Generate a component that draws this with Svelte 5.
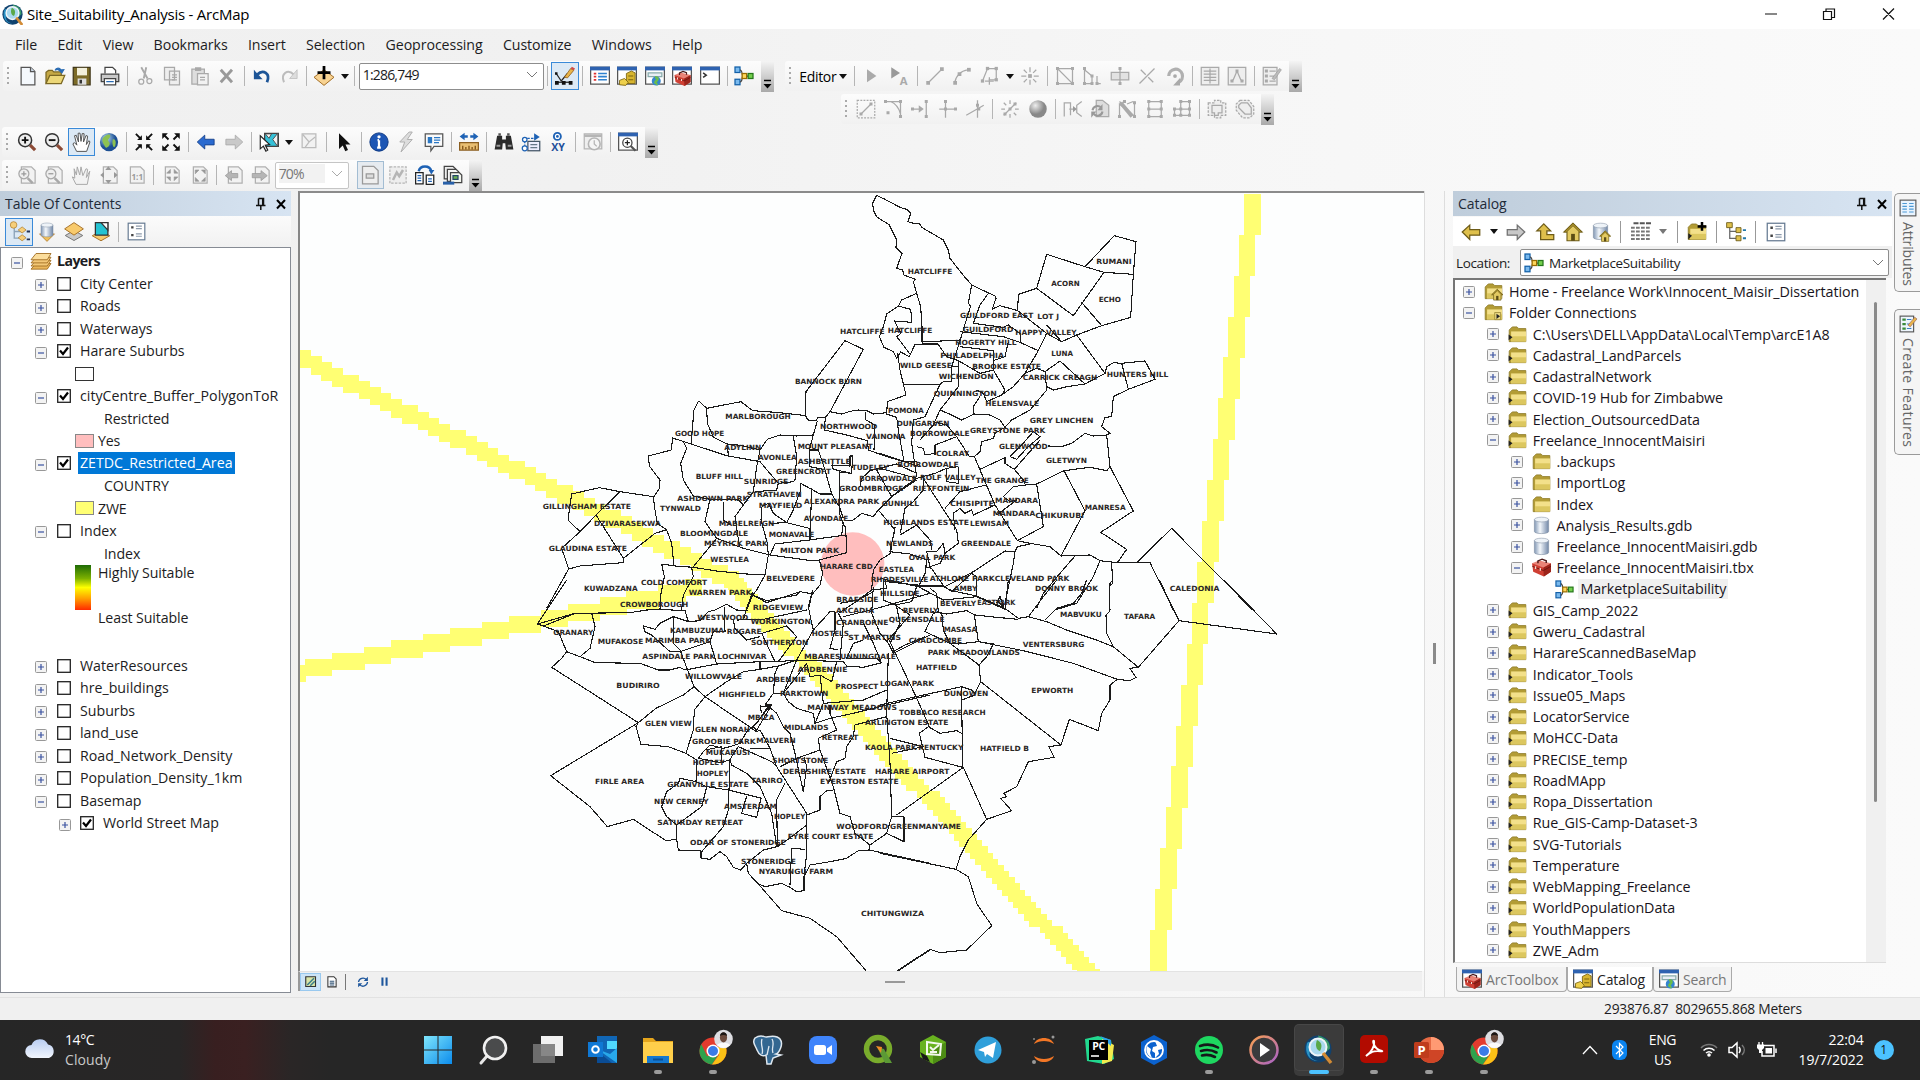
<script>
  // ---------- 16x16 glyphs for toolbars and trees ----------
  const win = '<rect x=".5" y="1" width="15" height="13.5" fill="#fff" stroke="#555"/><rect x="0" y=".5" width="16" height="3" fill="#2e62b0"/>';
  const mag = '<circle cx="6.5" cy="6.5" r="5.2" fill="#eee" stroke="#333" stroke-width="1.2"/><path d="M10.5 10.5l4 4" stroke="#8c4a35" stroke-width="2.6"/>';
  const gpage = '<path d="M3.5 1.5h8l3 3v10h-11z" fill="#f2f2f2" stroke="#b0b0b0"/>';
  const gmag = gpage + '<circle cx="5.5" cy="7" r="4" fill="#eee" stroke="#a8a8a8"/><path d="M8.5 10.5l4 4" stroke="#a8a8a8" stroke-width="2"/>';
  const folder = '<path d="M1 4.2L3.6 1.6h4L9 3h6v11H1z" fill="#b39c35" stroke="#8f7d2c" stroke-width=".7"/><path d="M2.6 5.4h12.6v8.4H2.6z" fill="#f3e08a"/><path d="M2.6 9.5h12.6v4.3H2.6z" fill="#dcc75f"/>';
  const house = '<path d="M8 1L.8 8h2.4v7h9.6V8h2.4z" fill="#e3ca62" stroke="#6e5c17" stroke-width=".9"/><path d="M8 1L.8 8h2L8 3l5.200 5h2z" fill="#a88f2c" stroke="#6e5c17" stroke-width=".6"/><path d="M6.5 9.5h3V15h-3z" fill="#5c4d14"/>';
  const cyl = '<path d="M2 3v10c0 2.4 12 2.4 12 0V3z" fill="url(#cyl)" stroke="#7d8ca0" stroke-width=".5"/><ellipse cx="8" cy="3" rx="6" ry="2" fill="#eef3f8" stroke="#8a98aa" stroke-width=".5"/>';
  const box = '<path d="M0 4.500l1 7L10 15.500l6-4V4.500z" fill="#cf3f33"/><path d="M9.500 8l.5 7.500 6-4V4.500z" fill="#9c241b"/><path d="M0 4.500L6 2l10 2.500L9.500 8z" fill="#e98377"/><path d="M.3 7L9.600 10.500 16 7" stroke="#6d1510" stroke-width=".8" fill="none"/><path d="M5 4.500V2.500L8.500 1l3.500 1.300v2" fill="none" stroke="#4c1a1a" stroke-width="1.200"/><path d="M3 7v2.200M7 8.500v2.200" stroke="#f7d9d0" stroke-width="1.100"/>';
  const model = '<g stroke-width="1"><rect x=".8" y=".8" width="4" height="4.4" fill="#79b9ee" stroke="#1360a8"/><rect x=".8" y="10.6" width="4" height="4.4" fill="#79b9ee" stroke="#1360a8"/><path d="M5 3c2.500 2 1 4 2 4.500M5 13c2.500-2 1-4 2-4.500M10 8h1.500" stroke="#444" fill="none"/><rect x="6.500" y="6" width="3.600" height="4" fill="#ffd65a" stroke="#9a6c00"/><rect x="11.300" y="6" width="3.900" height="4" fill="#73cf4c" stroke="#25761b"/></g>';
  const list = '<rect x="1" y="1" width="14" height="14" fill="#fff" stroke="#667a92"/><path d="M3.500 4.500h2M3.500 11h2" stroke="#444" stroke-width="2"/><path d="M7.500 3.500h5M7.500 5.500h5M7.500 10h5M7.500 12h5" stroke="#8d9aab"/>';
  const diamond = (y, f, s) => `<path d="M8 ${y}l7 4-7 4-7-4z" fill="${f}" stroke="${s}" stroke-width=".8"/>`;
  const G = '#a9a9a9';
  const dots = (pts, s = 1.2) => pts.map(([x, y]) => `<rect x="${x - s}" y="${y - s}" width="${s * 2}" height="${s * 2}" fill="${G}"/>`).join('');
  const gl = (d) => `<path d="${d}" fill="none" stroke="${G}" stroke-width="1"/>`;

  const icons = {
    new: '<path d="M2.500 1h7.500l3.500 3.500v10.500h-11z" fill="#f4f8fc" stroke="#555"/><path d="M10 1v3.500h3.500" fill="#cfdbe8" stroke="#555"/>',
    open: '<path d="M.8 14V5l2-1.500h3l1.200 1.200h6V8" fill="#c5a845" stroke="#7b6824"/><path d="M.8 14l3-6.500h12L13 14z" fill="#ecd778" stroke="#7b6824"/><path d="M8 3.500c1-2.500 4-2 4.500-.5M11 3.200l4-.2-1.500 2.500z" stroke="#2b6cb3" fill="#2b6cb3"/>',
    save: '<path d="M1 1h13.500v14H1z" fill="#7c6b28" stroke="#40371a"/><path d="M4 1.500h8v6H4z" fill="#f3f0dc"/><path d="M4.500 10h7v5h-7z" fill="#ddd"/><path d="M6 11h2v3H6z" fill="#333"/>',
    print: '<path d="M4 6V1h6l2.500 2.500V6" fill="#fff" stroke="#444"/><path d="M1 6.500h14v6H1z" fill="#c9c9c9" stroke="#444"/><path d="M3.500 10h9v5h-9z" fill="#fff" stroke="#444"/><path d="M5 12.500h6" stroke="#2b6cb3"/>',
    cut: `<path d="M5 1l5 9M9 1L7 10" stroke="${G}" stroke-width="1.500"/><circle cx="5" cy="12.500" r="2" fill="none" stroke="${G}"/><circle cx="11.500" cy="12" r="2" fill="none" stroke="${G}"/>`,
    copy: `<path d="M2 1h8v10H2zM6 4h8v11H6z" fill="#eee" stroke="${G}"/><path d="M8 7h4M8 9h4M8 11h4" stroke="${G}"/>`,
    paste: `<path d="M1.500 2.500h10v12h-10z" fill="#ddd" stroke="${G}"/><path d="M4 1h5v3H4z" fill="${G}"/><path d="M6 6h8.500v9H6z" fill="#f2f2f2" stroke="${G}"/><path d="M8 9h4M8 11h4" stroke="${G}"/>`,
    del: '<path d="M3 3l9 10M12 3L3 13" stroke="#999" stroke-width="2.300"/>',
    undo: '<path d="M4 7c5-5 11-1 8 6" fill="none" stroke="#1d5597" stroke-width="2.200"/><path d="M1.500 3v7.500h7z" fill="#1d5597"/>',
    redo: '<path d="M12 7C7 2 1 6 4 13" fill="none" stroke="#bcbcbc" stroke-width="1.600"/><path d="M14.500 3v7h-6z" fill="#ddd" stroke="#bbb" stroke-width=".6"/>',
    add: '<path d="M8 3l8 6-8 6.500L0 9z" fill="#f8d392" stroke="#a5712a" stroke-width=".8"/><path d="M8 0v10.500M2.800 5.300h10.400" stroke="#000" stroke-width="2.200"/>',
    edit: '<path d="M1 6l4 6 5-6" fill="none" stroke="#222"/><path d="M1.500 13h11" stroke="#222"/><g fill="#111"><rect x="0" y="12" width="3" height="3"/><rect x="5.500" y="12" width="3" height="3"/><rect x="11" y="12" width="3" height="3"/><rect x="0" y="5" width="2" height="2"/></g><path d="M7.500 9l5-7 2.500 1.500-5 6z" fill="#e9b54a" stroke="#8a5a1a" stroke-width=".6"/><path d="M12.500 2l1-1.500 2.500 1.500-1 1.500z" fill="#d14c45"/>',
    wtoc: win + '<path d="M3 6h2M3 8.500h2M3 11h2" stroke="#d33" stroke-width="1.400"/><path d="M6.500 6h7M6.500 8.500h7M6.500 11h7" stroke="#2e82d0" stroke-width="1.300"/>',
    wcat: win + '<path d="M7.500 6l4-2 3 1.500V14h-7z" fill="#d8b52f" stroke="#7b6510" stroke-width=".7"/><path d="M9 8h4M9 11h4" stroke="#7b6510" stroke-width=".8"/><path d="M2 11.500l4-1.500 3 3-2 2.500-5-.5z" fill="#eed04c" stroke="#7b6510" stroke-width=".7"/>',
    wsearch: win + '<rect x="2.500" y="5.500" width="11" height="3" fill="#e8eef5" stroke="#8aa"/><circle cx="9" cy="12" r="3.600" fill="#3585cf"/><path d="M8 9c2 0 3 1 1 3s1 2 0 3" stroke="#6bbd4a" stroke-width="2" fill="none"/>',
    wbox: win + '<g transform="translate(2 3.500) scale(.8)">' + box + '</g>',
    wpy: win + '<path d="M2.500 5.500l2.500 1.800-2.500 1.800" stroke="#333" fill="none" stroke-width="1.200"/>',
    model, list,
    zin: mag + '<path d="M3.800 6.500h5.400M6.500 3.800v5.400" stroke="#111" stroke-width="1.500"/>',
    zout: mag + '<path d="M3.800 6.500h5.400" stroke="#111" stroke-width="1.500"/>',
    hand: '<path d="M4.500 15.500L1.500 9.500l1.200-1 2 2L2.800 3l1.400-.4L6 8l-.3-7 1.500-.1L8 7.500 9 1.200l1.500.2L10 8l2-5.200 1.300.5-1 6.700 1.900-3 1 .8-2.700 7.700z" fill="#fff" stroke="#555" stroke-width=".8"/>',
    globe: '<circle cx="8" cy="8" r="7.300" fill="url(#globe)"/><path d="M3 5c2-3 6-4 6-2s-3 3-1 5-2 6-3 4-3-4-2-7M11 6c2-1 3 2 2 5s-3-1-2-5" fill="#8cc152"/>',
    fin: '<path d="M1.500 1.500l4 4M14.500 1.500l-4 4M1.500 14.500l4-4M14.500 14.500l-4-4" stroke="#111" stroke-width="1.500"/><path d="M2.500 6.300h3.800V2.500zM9.700 2.500v3.800h3.800zM2.500 9.700h3.800v3.800zM9.700 9.700h3.800L9.700 13.500z" fill="#111"/>',
    fout: '<path d="M2 2l4 4M14 2l-4 4M2 14l4-4M14 14l-4-4" stroke="#111" stroke-width="1.500"/><path d="M1 1h4.500L1 5.500zM15 1v4.500L10.500 1zM1 15v-4.500L5.500 15zM15 15h-4.500l4.500-4.500z" fill="#111"/>',
    prev: '<path d="M1 8l6-5.500v3.300h7.500v4.500H7v3.300z" fill="#2a6ad0" stroke="#153f88" stroke-width=".7"/>',
    next: '<path d="M15 8L9 2.500v3.300H1.500v4.500H9v3.300z" fill="#c9c9c9" stroke="#aaa" stroke-width=".7"/>',
    selfeat: '<path d="M4.500 1h11v10.500h-11z" fill="#35c1d8" stroke="#444"/><path d="M11 6l4-5v10.500zM5 1.500h5L8 5z" fill="#f2f2f2" stroke="#444" stroke-width=".7"/><path d="M1 3l7.500 7-3.500.5 2 4-1.500.8-2-4L1 13.500z" fill="#fff" stroke="#222" stroke-width=".9"/>',
    clear: `<path d="M2.500 1.500h11v11h-11z" fill="#f2f2f2" stroke="#bbb"/><path d="M3 2l5 6 5-4M8 8l-3 4" stroke="#bbb" fill="none"/>`,
    arrow: '<path d="M4 1v12.500l3-2.700 2 4.500 2.200-1-2-4.300h4z" fill="#111"/>',
    info: '<circle cx="8" cy="8" r="7.300" fill="#1d56b4" stroke="#0f3a85" stroke-width=".8"/><path d="M8 6.500v6M6.500 12.500h3M6.800 6.500H8" stroke="#fff" stroke-width="1.800"/><circle cx="8" cy="3.800" r="1.300" fill="#fff"/>',
    bolt: '<path d="M10.500 0L3 8h4l-3 8 9-10H9l4-6z" fill="#ddd" stroke="#b0b0b0" stroke-width=".8"/>',
    popup: '<path d="M1 1.500h14v10H8l-2.500 3.500v-3.500H1z" fill="#fafafa" stroke="#555"/><rect x="3" y="4" width="3.500" height="5" fill="#2b78c5"/><path d="M8 4.500h5M8 6.500h5M8 8.500h4" stroke="#2b78c5"/>',
    measure: '<path d="M.5 3.500l4-3v2H7v2H4.500v2zM15.500 3.500l-4-3v2H9v2h2.500v2z" fill="#1e62b5"/><path d="M.5 8.500h15v6H.5z" fill="#e9bf72" stroke="#8b5e20"/><path d="M3 14v-3M5.500 14v-2M8 14v-3M10.500 14v-2M13 14v-3" stroke="#7b4d12"/>',
    find: '<path d="M2.500 3h4v3h3V3h4l2 11H9.500l-.5-5H7l-.5 5H.5z" fill="#2b2b2b"/><path d="M3.500 1h2v2h-2zM10.500 1h2v2h-2z" fill="#555"/><path d="M2 11h3M11 11h3" stroke="#999" stroke-width="1.500"/>',
    route: '<path d="M3 12V5h9" stroke="#1e62b5" fill="none" stroke-dasharray="2 1"/><path d="M10.500 1v6l4.500-3z" fill="#1e62b5"/><rect x="5.500" y="7.500" width="9.500" height="7.500" fill="#eef" stroke="#456"/><path d="M7.500 10h5.500M7.500 12.500h5.500" stroke="#678"/><circle cx="3" cy="13" r="2" fill="#fff" stroke="#1e62b5"/><circle cx="3" cy="6" r="1.800" fill="#fff" stroke="#1e62b5"/>',
    xy: '<circle cx="7.500" cy="3.500" r="2.800" fill="#fff" stroke="#1e62b5" stroke-width="1.500"/><circle cx="7.500" cy="3.500" r="1.100" fill="#1e62b5"/><text x="8" y="15" font-size="8.500" font-weight="700" text-anchor="middle" fill="#1e4f9b" font-family="Open Sans">XY</text>',
    time: '<path d="M1 1.500h14v12H1z" fill="#eee" stroke="#b5b5b5"/><path d="M1 3h14" stroke="#b5b5b5" stroke-width="2"/><circle cx="9" cy="9.500" r="4.700" fill="#f5f5f5" stroke="#b5b5b5" stroke-width="1.300"/><path d="M9 6.500v3l2 2" stroke="#b5b5b5" fill="none"/>',
    viewer: win + '<circle cx="7.500" cy="8.500" r="3.700" fill="#fff" stroke="#444"/><path d="M10 11l4 4" stroke="#555" stroke-width="1.800"/><path d="M5.500 8.500h4M7.500 6.500v4" stroke="#222"/>',
    pzin: gmag + '<path d="M3.500 7h4M5.500 5v4" stroke="#999"/>',
    pzout: gmag + '<path d="M3.500 7h4" stroke="#999"/>',
    phand: `<path d="M4 15.500L1 9.500l2 1L2.500 3l1.800 5L5 1.500 7 8l1-6.500 1.500 7L12 3l1.300.5-1 6.500 2.700-5-2 10.500z" fill="#f2f2f2" stroke="${G}" stroke-width=".8"/>`,
    pfull: gpage + '<path d="M7.500 1L10 4H5zM7.500 15L10 12H5zM1 8l3-2.500v5zM15 8l-3-2.500v5z" fill="#999"/>',
    p11: gpage + '<text x="9" y="12" font-size="6.500" font-weight="700" text-anchor="middle" fill="#999" font-family="Open Sans">1:1</text>',
    pfin: gpage + '<path d="M4.500 6.500h3v-3zM13.500 6.500h-3v-3zM4.500 9.500h3v3zM13.500 9.500h-3v3z" fill="#999" stroke="#999" stroke-width=".5"/>',
    pfout: gpage + '<path d="M5 4h3L5 7zM13 4v3l-3-3zM5 13v-3l3 3zM13 13h-3l3-3z" fill="#999" stroke="#999" stroke-width=".5"/>',
    pprev: gpage + '<path d="M1 8.500l5-4v2.300h5v3.400H6v2.300z" fill="#b5b5b5" stroke="#999" stroke-width=".6"/>',
    pnext: gpage + '<path d="M13 8.500l-5-4v2.300H1v3.400h7v2.300z" fill="#b5b5b5" stroke="#999" stroke-width=".6"/>',
    draft: '<path d="M2 1h9l3.500 3.500V15H2z" fill="#eee" stroke="#999"/><path d="M5 7h6v3.500H5z" fill="#ddd" stroke="#999"/>',
    focus: '<path d="M1.500 1.500h13v13h-13z" fill="#eee" stroke="#b5b5b5" stroke-dasharray="2 1"/><path d="M4 12l3-6 2 3 3-5" stroke="#b5b5b5" fill="none" stroke-width="2"/>',
    layout: '<path d="M3 5c1-5 9-5 10 0" fill="none" stroke="#1e62b5" stroke-width="2"/><path d="M11 4h4.500L13 7.500z" fill="#1e62b5"/><path d="M.5 6h6v9h-6zM9 8h6v7.500H9z" fill="#fff" stroke="#222"/><path d="M2 8.500h3M2 10.500h3M2 12.500h3M10.500 11h3M10.500 13h3" stroke="#1e62b5"/>',
    ddp: '<path d="M1 1h7l2 2v8H1z" fill="#eee" stroke="#444"/><path d="M3.500 3.500h7l2 2V13h-9z" fill="#f5f5f5" stroke="#444"/><path d="M6 6h7l2 2v6H6z" fill="#f3f6ee" stroke="#444"/><rect x="8" y="8.500" width="4" height="3" fill="#6cb04f" stroke="#246"/><path d="M0 14.500h9" stroke="#2860a8" stroke-width="2.400"/>',
    // editing tools
    e1: '<path d="M4 2.500l7.500 5.500L4 13z" fill="#aaa"/>', e2: '<path d="M1 1l7 4.500L1 10z" fill="#999"/><text x="11" y="15" font-size="9" font-weight="700" text-anchor="middle" fill="#aaa" font-family="Open Sans">A</text>',
    e3: gl('M3 13L13 3') + dots([[2.500, 13.500], [13.500, 2.500]], 1.500), e4: gl('M2 14C3 8 6 4 13 3') + dots([[2.500, 13.500], [6, 6.500], [13.500, 3]], 1.500),
    e5: gl('M2 12L6 2h7v9H7') + dots([[6, 2], [13, 2], [13, 11], [2, 12]], 1.300) + gl('M4 12h7M7.500 9v6'), e6: gl('M8 1v4M8 11v4M1 8h4M11 8h4M3 3l2.500 2.500M13 3l-2.500 2.500M3 13l2.500-2.500M13 13l-2.500-2.500') + dots([[8, 8]], 1.500),
    e7: gl('M2 2v12h12zM2 2h12v12') + dots([[2, 2], [14, 2], [2, 14], [14, 14]]), e8: gl('M2 1v14M2 3l6 5v6H2M12 8v6h3') + dots([[2, 2], [8, 8], [8, 14], [12, 14], [2, 14]]),
    e9: '<path d="M1 5h14v6H1z" fill="#e2e2e2" stroke="#aaa"/>' + gl('M8 1v14') + dots([[8, 2], [8, 14]]), e10: gl('M2 14L14 2M3 3l4 4M9 9l4 4'),
    e11: '<path d="M3 8a5.500 5.500 0 1 1 8 5" fill="none" stroke="#b0b0b0" stroke-width="2.600"/><path d="M12 9.500v6H6.500z" fill="#aaa"/><circle cx="8" cy="8" r="1.500" fill="#aaa"/>',
    e12: '<path d="M1 1h14v14H1z" fill="#eee" stroke="#aaa"/>' + gl('M3 4h10M3 6.500h10M3 9h10M3 11.500h10M8 2v12'), e13: '<path d="M1 1h14v14H1z" fill="#eee" stroke="#aaa"/>' + gl('M3 12l2-1 3-7 3 7 2 1') + dots([[4, 12], [8, 4], [12, 12]]),
    e14: '<path d="M1 1h11v14H1z" fill="#eee" stroke="#aaa"/>' + gl('M6 4h5M6 8h5M6 12h5') + dots([[3.500, 4], [3.500, 8], [3.500, 12]]) + '<path d="M8 10l6-8 1.500 1-5.500 8z" fill="#bbb" stroke="#999" stroke-width=".5"/>',
    f1: `<rect x="1" y="1" width="14" height="14" fill="none" stroke="${G}" stroke-dasharray="1.500 1"/>` + gl('M4 12l8-8') + dots([[4, 12], [12, 4]]), f2: gl('M1 2h13v12M6 2c5 2 7 6 8 10') + dots([[2, 2], [14, 2], [14, 14], [4, 11]]),
    f3: gl('M1 8h8M13 1v14') + '<path d="M7 5l4 3-4 3z" fill="#aaa"/>' + dots([[13, 2], [13, 14], [2, 8]]), f4: gl('M6 1v14M1 8h13') + dots([[6, 2], [6, 8], [14, 8]]), f5: gl('M1 13L15 5M10 1v14') + dots([[10, 5], [11, 8]]),
    f6: gl('M3 13l10-10M8 1v3M8 12v3M1 8h3M12 8h3M3 3l2 2M11 11l2 2') + dots([[4, 12], [8, 8], [12, 4]]), f7: '<circle cx="8" cy="8" r="7" fill="url(#ball)"/>',
    f8: gl('M1 14V3h5v10M15 2l-4 3v6l4 3M5 8h5') + '<path d="M8 5.500l3 2.500-3 2.500z" fill="#999"/>', f9: '<path d="M5 1h5l5 4v9H5z" fill="#ddd" stroke="#aaa"/><path d="M2 9a4 4 0 0 1 7-2M10 10a4 4 0 0 1-7 2" fill="none" stroke="#999" stroke-width="1.600"/><path d="M10 4v5H6zM1 15v-5h4z" fill="#999"/>',
    f10: gl('M2 2l12 12M2 14V4l5 4M14 2v11M8 4l5-2') + '<path d="M3 3l9 11" stroke="#aaa" stroke-width="3"/>' + dots([[2, 14], [14, 3], [14, 14], [6, 2]]), f11: gl('M3 2h10v12H3zM3 8h10') + dots([[3, 2], [13, 2], [3, 8], [13, 8], [3, 14], [13, 14]]),
    f12: gl('M7 2h7v11H2V8h12M7 2v11') + dots([[7, 2], [14, 2], [7, 8], [14, 8], [2, 13], [7, 13], [14, 13], [2, 8]]),
    f13: `<path d="M1 3h5V1h5v2h4v10h-4v2H6v-2H1z" fill="#eee" stroke="${G}" stroke-dasharray="2 1"/><path d="M4 5h8v6H9v2H6v-2H4z" fill="none" stroke="${G}"/>`, f14: `<path d="M4 1h7l4 5v6l-3 3H6L1 9V4z" fill="#eee" stroke="${G}" stroke-dasharray="2 1"/><path d="M5 3h5l3 4v5H8L3 7V5z" fill="none" stroke="${G}"/>`,
    // contents panel
    t1: '<path d="M4 4v9h7M4 8h7" stroke="#8ba2b8" fill="none"/><g fill="#f6cf7a" stroke="#b5832f" stroke-width=".6"><circle cx="3.500" cy="3" r="2.500"/><path d="M10 4.500l3 2.300-3 2.300-3-2.300zM10 10.500l3 2.300-3 2.300-3-2.300z"/></g><path d="M13.500 8H16M13.500 14H16" stroke="#235" stroke-width="1.400"/>',
    t2: '<path d="M2 9.500l6 6 6-6z" fill="#f0c05c" stroke="#a9742b" stroke-width=".6"/><g transform="translate(1.600 0) scale(.8)">' + cyl + '</g>',
    t3: diamond(6.800, '#c9c9c9', '#777') + '<path d="M8 .5l7.500 5L8 10.500.5 5.500z" fill="#f8ca6c" stroke="#a9742b" stroke-width=".8"/>',
    t4: diamond(7, '#f8ca6c', '#a9742b') + '<path d="M3.500.5h10v10h-10z" fill="#25c3d2" stroke="#333"/><path d="M8 .5h5.500v6z" fill="#fff" stroke="#333"/>',
    layers: '<g stroke="#9f6c20" stroke-width=".7"><path d="M4 10h12l-3 4.500H0z" fill="#eab75c"/><path d="M4 7.500h12l-3 4.500H0z" fill="#f3c878"/><path d="M4 5h12l-3 4.500H0z" fill="#f3c878"/><path d="M4 2h12l-3 5H0z" fill="#fbdd9c"/></g>',
    // catalog panel
    cback: '<path d="M1 8l6-5.500V6h8v4.500H7V14z" fill="#dfc04c" stroke="#6d5b18"/>',
    cfwd: '<path d="M15 8L9 2.500V6H1v4.500h8V14z" fill="#c8c8c8" stroke="#707070"/>',
    cup: '<path d="M7 1.500L1.500 7h3v7H15v-4H9.500V7h3z" fill="#dfc04c" stroke="#6d5b18"/>',
    house, cyl, tbx: box, folder,
    gdbhome: '<g transform="scale(.95)">' + cyl + '</g><g transform="translate(6.500 6.500) scale(.6)">' + house + '</g>',
    grid: '<path d="M2 1h14" stroke="#555" stroke-width="1.500" stroke-dasharray="4 1"/><path d="M0 4.500h15M0 7.500h15M0 10.500h15M0 13.500h15" stroke="#777" stroke-width="1.600" stroke-dasharray="3 1"/>',
    folderadd: folder + '<path d="M12 0v7M8.500 3.500h7" stroke="#000" stroke-width="2"/><path d="M1 9l3 2-3 3z" fill="#222"/>',
    ctree: '<path d="M3 4v9h6M3 7.500h6" stroke="#666" fill="none"/><g fill="#dfc04c" stroke="#6d5b18" stroke-width=".7"><path d="M.5.500h4.500v4H.5zM8 4.500h4v4H8zM8 11h4v4H8z"/></g><path d="M13.500 6.500H16M13.500 13H16" stroke="#27a" stroke-width="1.500"/>',
    folderhome: folder + '<g transform="translate(6 5.500) scale(.65)">' + house + '</g>',
    foldercon: folder + '<path d="M9 8h5v6H9z" fill="#ead782" stroke="#8f7d2c" stroke-width=".6"/><path d="M10.500 9l3 2.200-3 2.200z" fill="#222"/>',
    folderlink: folder + '<path d="M.5 8l3.300 2.300L.5 12.800z" fill="#222"/>',
    attr: '<rect x="1" y="1" width="14" height="14" fill="#e9f4ff" stroke="#555"/><path d="M3 4h4M3 6.500h4M3 9h4M3 11.500h4M9 4h4M9 6.500h4M9 9h4M9 11.500h4" stroke="#4d9ad6"/>',
    create: '<rect x="1" y="1" width="12" height="14" fill="#eef5fc" stroke="#555"/><path d="M3 4h3M3 8h3M3 12h3" stroke="#3a8a3a" stroke-width="2"/><path d="M7 4h4M7 8h4M7 12h4" stroke="#3a7fc4"/><path d="M8 9l6-7 2 1.500-6 7z" fill="#eab54a" stroke="#855" stroke-width=".5"/>',
    mview: '<path d="M1 1h13v13H1z" fill="#dbe6a8" stroke="#333" stroke-width="1.500"/><path d="M3 12l9-9M7 13l6-6" stroke="#3b7d8a" stroke-width="2"/>',
    mlay: '<path d="M2.500 1h8l3 3v10.500h-11z" fill="#fff" stroke="#333" stroke-width="1.400"/><path d="M5 7h6M5 9.500h6M5 12h6" stroke="#357" stroke-width="1.500"/>',
    refresh: '<path d="M2 8a6 6 0 0 1 10.500-3M14 8a6 6 0 0 1-10.500 3.500" stroke="#1d569c" fill="none" stroke-width="1.800"/><path d="M14.500 1v5.500H9zM1.500 15V9.500H7z" fill="#1d569c"/>',
    pause: '<path d="M5 2v12M11 2v12" stroke="#1d569c" stroke-width="3"/>'
  };

  const row1 = ['new', 'open', 'save', 'print', '|', 'cut', 'copy', 'paste', 'del', '|', 'undo', 'redo', '|', 'add', 'v', '|', 'SCALE', '|', '!edit', '|', 'wtoc', 'wcat', 'wsearch', 'wbox', 'wpy', '|', 'model'];
  const rowE = ['EDITOR', '|', 'e1', 'e2', '|', 'e3', 'e4', 'e5', 'v', 'e6', '|', 'e7', 'e8', 'e9', 'e10', 'e11', '|', 'e12', 'e13', '|', 'e14'];
  const rowF = ['f1', 'f2', 'f3', 'f4', 'f5', '|', 'f6', 'f7', '|', 'f8', 'f9', 'f10', 'f11', 'f12', '|', 'f13', 'f14'];
  const row3 = ['zin', 'zout', '!hand', 'globe', '|', 'fin', 'fout', '|', 'prev', 'next', '|', 'selfeat', 'v', 'clear', '|', 'arrow', '|', 'info', 'bolt', 'popup', '|', 'measure', '|', 'find', 'route', 'xy', '|', 'time', '|', 'viewer'];
  const row4 = ['pzin', 'pzout', 'phand', 'pfull', 'p11', '|', 'pfin', 'pfout', '|', 'pprev', 'pnext', 'PCT', '!draft', 'focus', 'layout', 'ddp'];

  const menus = ['File', 'Edit', 'View', 'Bookmarks', 'Insert', 'Selection', 'Geoprocessing', 'Customize', 'Windows', 'Help'];

  const toc = [
    { t: 'Layers', d: 0, e: '-', icon: 1 },
    { t: 'City Center', d: 1, e: '+', c: 0 }, { t: 'Roads', d: 1, e: '+', c: 0 }, { t: 'Waterways', d: 1, e: '+', c: 0 },
    { t: 'Harare Suburbs', d: 1, e: '-', c: 1 }, { t: '', sw: 'white' },
    { t: 'cityCentre_Buffer_PolygonToR', d: 1, e: '-', c: 1 }, { t: 'Restricted', head: 1 }, { t: 'Yes', sw: 'pink' },
    { t: 'ZETDC_Restricted_Area', d: 1, e: '-', c: 1, sel: 1 }, { t: 'COUNTRY', head: 1 }, { t: 'ZWE', sw: 'yellow' },
    { t: 'Index', d: 1, e: '-', c: 0 }, { t: 'Index', head: 1 }, { ramp: 1 },
    { t: 'WaterResources', d: 1, e: '+', c: 0 }, { t: 'hre_buildings', d: 1, e: '+', c: 0 }, { t: 'Suburbs', d: 1, e: '+', c: 0 },
    { t: 'land_use', d: 1, e: '+', c: 0 }, { t: 'Road_Network_Density', d: 1, e: '+', c: 0 }, { t: 'Population_Density_1km', d: 1, e: '+', c: 0 },
    { t: 'Basemap', d: 1, e: '-', c: 0 }, { t: 'World Street Map', d: 2, e: '+', c: 1 }
  ];

  const L = (t, e = '+') => [t, 1, e, 'folderlink'];
  const catalog = [
    ['Home - Freelance Work\\Innocent_Maisir_Dissertation', 0, '+', 'folderhome'], ['Folder Connections', 0, '-', 'foldercon'],
    L('C:\\Users\\DELL\\AppData\\Local\\Temp\\arcE1A8'), L('Cadastral_LandParcels'), L('CadastralNetwork'), L('COVID-19 Hub for Zimbabwe'), L('Election_OutsourcedData'), L('Freelance_InnocentMaisiri', '-'),
    ['.backups', 2, '+', 'folder'], ['ImportLog', 2, '+', 'folder'], ['Index', 2, '+', 'folder'], ['Analysis_Results.gdb', 2, '+', 'cyl'], ['Freelance_InnocentMaisiri.gdb', 2, '+', 'cyl'], ['Freelance_InnocentMaisiri.tbx', 2, '-', 'tbx'],
    ['MarketplaceSuitability', 3, '', 'model'],
    ...['GIS_Camp_2022', 'Gweru_Cadastral', 'HarareScannedBaseMap', 'Indicator_Tools', 'Issue05_Maps', 'LocatorService', 'MoHCC-Data', 'PRECISE_temp', 'RoadMApp', 'Ropa_Dissertation', 'Rue_GIS-Camp-Dataset-3', 'SVG-Tutorials', 'Temperature', 'WebMapping_Freelance', 'WorldPopulationData', 'YouthMappers', 'ZWE_Adm'].map((t) => L(t))
  ];
  const catbar = ['cback', 'v', 'cfwd', 'cup', 'house', 'gdbhome', '|', 'grid', 'w', '|', 'folderadd', '|', 'ctree', '|', 'list'];

  // ---------- map: four tiles, each drawn at three units per pixel ----------
  const tiles = [
    { x: 530, y: 190,
      lines: '1240,150 1175,112 1170,102 1150,100 1134,95 1142,70 1130,58 1110,52 1065,28 1040,16 1028,40 1030,60 1040,80 1078,105 1100,150 1098,172 1116,190 1100,235 1118,240 1122,255 1156,268 1150,275 1160,310 1172,350 1176,410 1176,456 1290,450|1160,310 1115,330 1105,348 1070,372 1060,410 1048,440 1062,472 1090,485 1100,505 1112,486 1138,500 1155,463 1225,460|1105,348 1142,358 1146,397 1093,393 1113,430 1100,440 1112,455 1142,495|1103,490 1110,540 1128,615 1072,635 1070,672 1100,682 1105,720 1122,815|945,452 1000,478 900,665 886,682 862,682 860,692 833,690 826,675 828,605 945,452|1120,583 1230,583|506,632 530,655 633,635 668,662 750,668 828,677|506,632 492,660 483,762 428,744 424,780 355,798 358,828 390,870 388,895 370,922 375,960 382,1000 410,1020 425,1060 432,1127|530,655 532,700 550,742 592,762 632,766 690,780|483,762 590,797 690,815|592,762 595,797|460,755 470,775 452,820 460,870 490,918 540,928|862,692 850,735 800,738 750,735 712,748 690,780 680,830 670,905 640,945 615,980 628,1068|900,665 935,672 960,664 985,660 1010,662 1030,672 1070,668|886,682 883,720 950,735 1012,752 1015,780 1070,800 1122,815 1160,815|1005,665 1008,690 1035,705 1032,780|850,735 838,780 840,830 880,838|790,738 800,800 795,870 790,875 745,880|838,780 865,780 885,840 905,912 870,912 812,880 812,900|690,815 745,880 740,900 675,905|928,846 928,970 940,1000 935,1035|905,825 910,838 965,850 968,798 960,798 960,828 905,825|928,846 965,850|990,890 995,865 1020,842 1100,822 1160,850|1040,840 1085,920 1160,870|1085,920 1045,960 1030,980 995,970 970,990 948,992|1045,960 1095,1020 1085,1060 1082,1090|208,893 125,912 114,990 150,1025 198,975 270,905 370,920|208,893 270,905|198,975 280,1105 375,1030 408,1020|150,1025 95,1075 116,1137 150,1128 280,1118 280,1105|116,1137 50,1255|395,1122 435,1128 490,1132 560,1143 650,1152 705,1155 715,1095 712,1060 693,990 695,950|395,1122 403,1160 392,1215 390,1260|485,1132 490,1160 460,1215 455,1260|490,1130 560,1045 525,995 540,928 625,930 640,945|560,1045 640,1075 720,1095 845,1112 868,1110 878,1150 870,1185 845,1215 835,1260|580,935 580,990 600,1002|695,950 715,940 730,970 770,998 838,1015 838,1050|770,998 720,1000|838,1050 735,1062 720,1095|838,1050 948,1035 945,1010 935,995|948,1035 950,1088 868,1110|845,895 840,1050|905,912 928,950 940,985|770,998 790,960 812,900|705,1155 680,1200 668,1215 710,1238 810,1205 848,1212|668,1215 650,1260|1082,1090 1050,1110 1030,1140 1025,1200 985,1230 930,1240|1025,1200 1070,1195 1065,1170',
      labels: 'GOOD HOPE,435,583,731|MARLBOROUGH,586,782,679|BANNOCK BURN,795,996,573|HATCLIFFE,930,1064,423|HATCLIFFE,1073,1207,421|NORTHWOOD,870,1042,709|POMONA,1074,1181,660|VAINONA,1008,1126,738|MOUNT PLEASANT,803,1028,769|ADYLINN,583,694,772|AVONLEA,684,800,802|ASHBRITTLE,803,962,814|GREENCROFT,738,903,844|TUDELEY,965,1076,831|BLUFF HILL,497,639,859|SUNRIDGE,641,775,874|BORROWDALE,988,1160,866|GROOMBRIDGE,927,1120,895|STRATHAVEN,650,815,914|ASHDOWN PARK,442,655,925|MAYFIELD,686,817,945|ALEXANDRA PARK,822,1048,934|GUNHILL,1055,1167,941|TYNWALD,390,513,956|GILLINGHAM ESTATE,38,303,948|DZIVARASEKWA,192,392,1001|MABELREIGN,566,733,1000|AVONDALE,821,955,986|BLOOMINGDALE,450,655,1030|MONAVALE,716,853,1034|MEYRICK PARK,522,714,1061|MILTON PARK,750,927,1080|WESTLEA,541,657,1109|HARARE CBD,870,1028,1128|GLAUDINA ESTATE,56,291,1075|EASTLEA,1046,1152,1139|BELVEDERE,709,855,1166|COLD COMFORT,333,531,1177|KUWADZANA,162,323,1195|WARREN PARK,476,665,1207|CROWBOROUGH,270,475,1244|BRAESIDE,919,1045,1229' },
    { x: 880, y: 190,
      lines: '190,150 205,180 210,205 245,250 275,285 345,318 348,325 337,357 360,347 413,362|275,285 265,340 272,348 262,380 240,452 215,530 235,530|325,310 300,345 280,400 370,412 385,405 420,430 422,458 475,482 500,430 413,362 415,313 470,295 500,193 615,230 703,137 768,155 760,253 672,247 615,230|470,295 580,377 672,247|605,337 665,407 752,382 760,253|665,407 590,435 545,455 500,430|500,405 545,455|590,435 675,550 680,530 700,518 725,520 795,513 825,568 745,598 725,520|745,598 700,620 695,680 675,682 665,710 690,730 680,735 690,830 760,963 662,1027 740,1078 712,1118|475,482 435,550 470,535 495,545 540,513 575,545 615,582 675,550|435,550 400,590 365,615 320,635 310,610 290,600|500,590 520,600 560,590 615,582|495,545 500,600 450,660 395,690 375,712 360,690 330,675 282,672 280,650 300,620|240,425 370,440 422,458|385,455 375,500 340,512 340,540 300,550 235,512|235,512 235,590 180,660 160,705 120,750|105,463 175,463 200,500 235,512|240,470 340,482 340,512|340,540 375,600 365,615|70,583 180,583 190,575 215,575 215,530|180,583 135,680 100,690 95,760 110,860|180,660 215,675 245,690 282,672|375,712 345,730 340,745 305,755 300,785 283,800 268,800 230,740 165,765 165,795|160,695 200,705 230,740|110,770 130,775 135,795 165,790|300,838 375,803 375,820 403,838 430,870 436,885 470,882 490,1010 412,1052 345,945 283,800|470,882 552,842 630,832 680,842 690,830|680,735 640,738 615,730 575,760 545,770 505,768|390,800 425,765 460,725 480,740 440,775 410,808 390,800|403,838 480,750|552,842 615,962 543,1098|412,1052 450,1060 510,1070 543,1098 630,1095 660,1112 712,1118 770,1118 875,1015 1118,1260|770,1118 810,1118 880,1260|130,865 230,1020 235,1060 195,1090 190,1060 170,1085 140,1085 150,1130 180,1120 195,1090|110,865 165,850 200,835 235,830|130,865 130,900 100,935 75,955 65,1010 60,1030|235,830 235,880 200,875 200,835|225,1020 220,970 240,955 255,970 275,960 280,975 345,945|195,955 240,905 318,885|436,885 400,890 370,920 390,935 410,930 350,975|60,1035 110,1005 150,1050 155,1080|45,1012 30,1085|30,1085 90,1092 140,1110 135,1150 115,1190 190,1187|195,1190 280,1145 375,1083 405,1085 400,1120 375,1240|190,1187 215,1205 275,1150 290,1160 290,1220|405,1085 412,1070 460,1060|585,1098 540,1150 490,1210 470,1255|660,1112 640,1160 590,1240 525,1260|695,1118 698,1180 688,1190 690,1260|0,1165 115,1190 190,1230 290,1220 380,1260|135,1130 155,1135 190,1187|0,790 75,815 120,830|0,835 110,865 60,900 35,920',
      labels: 'HATCLIFFE,83,217,244|RUMANI,649,755,213|ACORN,514,599,281|ECHO,656,723,327|GUILDFORD EAST,240,460,376|LOT J,472,537,379|GUILDFORD,248,400,419|HAPPY VALLEY,406,590,428|HOGERTY HILL,226,410,457|PHILADELPHIA,181,372,495|LUNA,514,579,491|WILD GEESE,60,216,525|BROOKE ESTATE,277,483,528|CARRICK CREAGH,428,652,562|HUNTERS HILL,680,865,552|WICHENDON,176,341,559|QUINNINGTON,161,350,611|HELENSVALE,316,477,641|GREY LINCHEN,449,640,690|DUNGARVEN,50,208,701|GREYSTONE PARK,270,496,720|BORROWDALE,90,269,731|GLENWOOD,357,503,769|COLRAY,168,268,791|GLETWYN,498,621,810|BORROWDALE,52,236,822|ROLF VALLEY,120,287,862|THE GRANGE,287,446,870|RIETFONTEIN,98,268,896|CHISIPITE,210,342,940|MANDARA,345,474,930|MANDARA,338,466,971|CHIKURUBI,466,612,975|MANRESA,614,737,952|HIGHLANDS ESTATE,10,267,998|LEWISAM,270,387,1001|NEWLANDS,18,160,1061|GREENDALE,243,393,1061|OVAL PARK,86,226,1102|RHODESVILLE,-28,145,1169|ATHLONE PARK,149,344,1166|CLEVELAND PARK,344,568,1166|AMBY,221,292,1196|DONNY BROOK,465,654,1196|CALEDONIA,869,1018,1196|HILLSIDE,0,119,1210|BEVERLY,180,288,1241|EASTPARK,292,406,1237' },
    { x: 530, y: 580,
      lines: '110,0 22,132 135,100 300,98 350,90 385,88 465,92 475,125 510,122 535,95 555,90 590,73 620,90 655,92|22,132 40,138 85,155 110,215 150,230 180,205 195,140 185,100|110,215 95,235 65,262 325,428 62,587 180,680 232,740 310,718 408,782 438,778|40,138 135,100|150,230 195,248 330,250 385,270 420,270 450,262 465,270 560,252 690,245 745,245 800,240 940,245 950,258 1000,262 1055,248|340,138 375,148 390,130 430,110 475,125|340,138 345,155 365,165 420,215 450,215 540,185 550,155 585,155 583,80|430,110 430,190 450,210 492,320 525,350 680,455|540,185 560,252|492,320 460,345 378,385 325,428|690,245 690,268 640,275 590,305 525,350 493,390 490,450 468,520|690,268 745,258 800,240|325,428 318,440 333,493 415,500 468,520 500,540 498,605 450,595 445,610 410,635 395,680 410,710 440,735 440,778 445,810 510,812 515,835 540,838 570,815 590,830 610,862 632,870 650,850 655,880 685,912 705,920 755,910 780,922 800,935 822,932 822,890 840,855 900,845 950,835 985,812 1018,810 1200,850|498,605 530,620 595,630 695,655|530,620 515,680 440,735|600,540 595,690 580,740 515,815 510,835|600,540 605,555 650,580 690,620 725,700 740,800|520,515 540,495 580,505 600,500 630,490 650,455 680,430 715,378|520,515 505,535 575,548 602,538|525,510 575,500 575,548|600,540 605,530 625,500 725,545 740,560 830,700 830,820 822,890|660,505 720,505 740,560|765,610 740,660 742,800 785,770 830,735|680,455 690,450 720,505|695,400 690,378 715,380|715,378 740,400 760,440 780,460 795,520 820,635 830,560 822,530|725,375 680,450 670,440 710,390 725,375|725,375 705,375 730,340 760,340 800,290 830,250|745,255 735,280 730,340|745,245 735,245 695,160 770,138 800,170 745,245|620,120 700,118 830,90|610,120 615,145 650,180 690,170|760,340 800,240 850,150 900,95 915,95 915,150 900,205 925,210|848,30 835,80 845,130 850,150|668,35 650,85 640,120|668,45 710,62 800,45 810,35 848,42|760,340 775,365 800,385 850,400 855,430 900,415 970,400 1070,375 1200,345|830,250 840,290 870,285 905,305 920,245|855,430 880,370 870,285|880,370 1000,360 1070,330|1075,220 1070,400 1080,550 1085,710|900,375 900,400 920,450 865,475 870,510 910,620 930,700 960,710 975,760 1020,795 1018,810|975,435 970,470 950,500 945,535 920,545 895,610|975,435 1070,410|750,560 800,535 870,510|910,630 890,632 870,650 870,690 830,705|650,648 635,700 680,712 693,655|785,805 825,808|785,805 780,915|650,850 700,810 740,800|1085,710 1122,710 1122,785 1070,760 1020,795|1085,710 1070,760|685,912 755,992 840,1015 920,1070 1008,1172|1105,1172 1200,1110|1030,35 985,60 925,100 940,130 930,240|1030,20 1025,100 1050,160 1075,190 1090,220|940,110 1040,85 1200,40|1090,220 1200,165|1000,180 970,190 950,235 1040,235 1055,250|1000,130 1030,190 1055,250|1100,80 1110,130 1080,190',
      labels: 'RIDGEVIEW,668,820,82|ARCADIA,918,1032,90|WESTWOOD,502,655,112|WORKINGTON,662,843,123|CRANBORNE,918,1075,127|KAMBUZUMA,420,582,150|RUGARE,590,695,153|HOSTELS,845,957,160|ST MARTINS,955,1113,172|GRANARY,70,190,157|MUFAKOSE,203,340,183|MARIMBA PARK,345,543,180|SOUTHERTON,663,835,187|ASPINDALE PARK,337,556,228|LOCHNIVAR,562,710,228|MBARE,822,915,228|SUNNINGDALE,915,1098,228|ARDBENNIE,803,952,269|WILLOWVALE,465,636,289|ARDBENNIE,679,828,299|BUDIRIRO,259,389,315|HIGHFIELD,566,707,344|PARKTOWN,750,895,341|PROSPECT,916,1045,318|MAINWAY MEADOWS,832,1101,382|MBIZA,653,733,411|GLEN VIEW,345,485,431|GLEN NORAH,495,660,449|MIDLANDS,762,896,441|ARLINGTON ESTATE,1005,1255,427|RETREAT,875,985,471|GROOBIE PARK,486,677,484|MALVERN,679,797,480|MUKABUSI,527,660,517|KAOLA PARK,1005,1160,502|HOPLEY,488,583,547|SHORTSTONE,727,895,542|HOPLEY,500,596,581|DERBSHIRE ESTATE,758,1008,573|HARARE AIRPORT,1035,1258,573|FIRLE AREA,195,342,603|GRANVILLE ESTATE,412,656,614|TARIRO,663,758,600|EYERSTON ESTATE,870,1106,604|NEW CERNEY,372,536,663|AMSTERDAM,582,740,678|HOPLEY,732,826,708|SATURDAY RETREAT,382,639,727|WOODFORD,919,1074,739|ODAR OF STONERIDGE,480,767,787|EYRE COURT ESTATE,773,1030,768|STONERIDGE,633,798,843|NYARUNGU FARM,686,909,873|CHITUNGWIZA,993,1182,1000' },
    { x: 880, y: 580,
      lines: '20,5 110,15 190,20 215,32 290,48 375,85 415,115 445,110 500,125 560,150 650,180 700,200 775,262 750,265 768,292 750,302 712,298 690,315 690,360 665,400 655,452 568,418 543,495 507,500 522,532 445,545 410,620 372,640 380,650 362,655 395,692 320,718 250,562 50,705|700,200 680,160 678,105 688,95 690,10 698,0|445,110 490,50 530,0|495,120 530,85 580,70 605,40 620,0|775,262 897,122 838,0|897,122 1190,162 1032,0|155,95 200,102 260,92 285,105 350,112 415,118|283,105 295,185 430,212 580,250 712,298|170,40 175,95 160,100 135,155 210,190 235,192 295,185|295,185 340,192 320,230 297,255 210,190|297,255 302,305 543,495|302,305 285,340 275,330 245,320 108,350 0,375|245,320 245,360 285,345|245,360 248,562 135,532 118,460 145,440 180,460 230,452 245,460|20,165 108,350 148,440|40,215 75,195 135,170|30,475 130,500 35,520|320,718 265,780 240,830 228,868 0,820|228,868 265,890 290,970 335,1037 260,1110 180,1118 150,1108 52,1172|10,0 10,60 45,75 95,65 110,20|45,75 90,105 20,185|185,95 190,150 210,190|290,0 290,48|385,0 375,85|150,25 170,40|350,60 372,82 360,50 350,70',
      labels: 'BEVERLY,68,175,90|QUEENSDALE,26,194,119|MABVUKU,540,665,104|TAFARA,732,826,108|MASASA,191,291,149|CHADCOMBE,86,246,180|VENTERSBURG,428,613,194|PARK MEADOWLANDS,143,420,217|HATFIELD,108,231,262|EPWORTH,454,580,330|DUNOWEN,191,325,341|TOBBACO RESEARCH,57,317,397|KENTUCKY,115,250,501|HATFIELD B,300,447,505|LOGAN PARK,0,162,311|GREENMANYAME,30,243,738' }
  ];
  const labelsOf = (s) => s.split('|').map((r) => { const [t, a, b, y] = r.split(','); return { t, x: +a, w: b - a, y: +y + 8 }; });

  // raster corridors, built from grid cells
  const cw = 5.35, ch = 6.15;
  const cells = [];
  for (let x = 300; x < 740; x += cw) {
    const y = 350 + (x - 300) * 0.516;
    cells.push([x, 350 + Math.round((y - 350) / ch) * ch, cw + 0.3, 18.400]);
  }
  for (let x = 300; x < 700; x += cw) {
    const y = 662 - (x - 300) * 0.208;
    cells.push([x, 665 - Math.round((665 - y) / ch) * ch, cw + 0.3, 17.400]);
  }
  for (let y = 582; y < 972; y += ch) {
    const x = 724 + (y - 582) / 1.1;
    cells.push([724 + Math.round((x - 724) / cw) * cw, y, 23, ch + 0.3]);
  }
  for (let i = 0; i < 20; i++) cells.push([1244 - i * 5.220, 193.800 + i * 40.900, 16.600, 41.200]);

  // ---------- taskbar ----------
  const chrome = '<circle cx="15" cy="16" r="13.500" fill="#e33b2e"/><path d="M3.300 9.200A13.500 13.500 0 0 0 14 29.500l6-9.500-11 1z" fill="#2fa24c"/><path d="M28 12H15l6 8-7 9.500A13.500 13.500 0 0 0 28 12z" fill="#fbc116"/><circle cx="15" cy="16" r="6.500" fill="#fff"/><circle cx="15" cy="16" r="5" fill="#3b7be8"/><circle cx="25.500" cy="4" r="9.300" fill="#dedee2"/><path d="M19 10c2-3 11-3 13 0-3 4-10 4-13 0z" fill="#fafafa"/><ellipse cx="25.500" cy="2.500" rx="3.600" ry="5" fill="#6b4a3c"/><path d="M22 1c0-5 7-5 7 0-2-1.500-5-1.500-7 0z" fill="#1c1614"/>';
  const tasks = [
    ['<defs><linearGradient id="wn" x2="1" y2="1"><stop stop-color="#7fe6fc"/><stop offset="1" stop-color="#0c8cec"/></linearGradient></defs><path d="M1 1h13.500v13.500H1zM15.500 1H29v13.500H15.500zM1 15.500h13.500V29H1zM15.500 15.500H29V29H15.500z" fill="url(#wn)"/>'],
    ['<path d="M9 21l-6 7" stroke="#e6e6e6" stroke-width="3" stroke-linecap="round"/><circle cx="17" cy="13" r="11" fill="#4a4b4c" stroke="#f1f1f1" stroke-width="2.600"/>'],
    ['<path d="M8 1h22v20H8z" fill="#f0f0f0"/><path d="M0 9h22v19H0z" fill="#777" opacity=".88"/>'],
    ['<path d="M9 1h20v27H9z" fill="#1066b5"/><path d="M19 6h10v8H19z" fill="#50d9ff"/><path d="M9 14l20 14V13l-7 6z" fill="#28a8ea"/><path d="M9 16l15 12H9z" fill="#0a4c95"/><path d="M0 7h15v15H0z" fill="#0f78d4"/><circle cx="7.500" cy="14.500" r="3.300" fill="none" stroke="#fff" stroke-width="2"/>'],
    ['<path d="M0 3h10l3 3h17v22H0z" fill="#e5a51c"/><path d="M0 7h30v21H0z" fill="#ffcf4a"/><path d="M4 21h22v7H4z" fill="#1478cf"/><path d="M10 24.500h10" stroke="#0a4f95" stroke-width="2"/>', 'dot'],
    [chrome, 'dot'],
    ['<path d="M2 3c6-4 9-1 11-1s10-3 14 2-1 14-4 15l5 1-8 3-2 6h-4l-1-9c-3 2-7 0-9-5S-1 7 2 3z" fill="#336791" stroke="#dfe8f0" stroke-width="1.500"/><path d="M9 4c-2 6 2 10 0 15M19 4c3 5-1 9 1 14M14 20l2-9" stroke="#dfe8f0" fill="none" stroke-width="1.300"/>'],
    ['<rect x="1" y="1" width="28" height="28" rx="8" fill="#3f84fb"/><rect x="6" y="10" width="12" height="10" rx="2.500" fill="#fff"/><path d="M19 13.500l5-3.500v10l-5-3.500z" fill="#fff"/>'],
    ['<circle cx="15" cy="14" r="11.500" fill="none" stroke="#79ac2c" stroke-width="5.500"/><path d="M14 12l7 2 8 14h-7z" fill="#5c9a35"/><path d="M13 11l6 1-1 6z" fill="#f18a26"/>'],
    ['<path d="M15 0l13 7v15l-13 7-13-7V7z" fill="#68b21f"/><path d="M28 7v15l-13 7V15z" fill="#4d8d14"/><path d="M9 7l14 2-1 11-13-1z" fill="none" stroke="#f4f9ee" stroke-width="2"/><path d="M12 12l3 3 6-5M12 17h7" stroke="#f4f9ee" stroke-width="2" fill="none"/><path d="M2 17l7 4 3 6-7-3z" fill="#181818"/>'],
    ['<circle cx="15" cy="15" r="13.500" fill="#2f9fda"/><path d="M5 15l18-8-3 16-6-4-2 3-1-5z" fill="#fff"/>'],
    ['<path d="M5 9c3-8 17-8 20 0-6-4-14-4-20 0zM5 21c3 8 17 8 20 0-6 4-14 4-20 0z" fill="#f37726"/><circle cx="24" cy="2" r="1.500" fill="#999"/><circle cx="5" cy="27" r="2" fill="#999"/><circle cx="5" cy="4" r="1" fill="#888"/>'],
    ['<path d="M1 4l13-3 13 4 3 19-10 5-17-3z" fill="#22d88f"/><path d="M18 4l12 6-2 16-10 3z" fill="#f3ea4e"/><path d="M16 1l11 4v6z" fill="#2a9de8"/><rect x="5" y="5" width="19" height="20" fill="#000"/><text x="14.500" y="14.500" font-size="10.500" font-weight="700" text-anchor="middle" fill="#fff" font-family="Open Sans">PC</text><path d="M7 21h8" stroke="#fff" stroke-width="1.600"/>'],
    ['<path d="M15 0l13 7v16l-13 7-13-7V7z" fill="#0b62cf"/><circle cx="15" cy="15" r="9" fill="none" stroke="#fff" stroke-width="1.800"/><path d="M16 6c4 1 7 4 7 8l-4 1 1 4-4 4v-5l-3-2 1-4 4-1zM8 11l4 3-1 4 2 5c-4-2-7-7-5-12z" fill="#fff"/>'],
    ['<circle cx="15" cy="15" r="14" fill="#1ed760"/><path d="M6 11c6-2 13-1.500 18 1.500M7 16c5-1.500 11-1 15.500 1.500M8 20.500c4-1 9-.5 13 1.500" stroke="#15181a" fill="none" stroke-width="2.600" stroke-linecap="round"/>', 'dot'],
    ['<defs><linearGradient id="mp" x2="1" y2="1"><stop stop-color="#f9a050"/><stop offset="1" stop-color="#a862c8"/></linearGradient></defs><circle cx="15" cy="15" r="13.500" fill="#3b3b3d" stroke="url(#mp)" stroke-width="2.500"/><path d="M11 8l10 7-10 7z" fill="#fff"/>'],
    ['<circle cx="14" cy="14" r="13.500" fill="#10426f"/><path d="M14 .500c8 2 12 6 12 13l-6 5z" fill="#3a9a6a"/><path d="M3 8c4-4 5 3 3 8s2 9 8 10C5 26 0 18 3 8z" fill="#2a92c4"/><circle cx="14" cy="12" r="8.500" fill="#a9d8ee" stroke="#eef4f8" stroke-width="2"/><path d="M13 5c4 2 6 5 3 11-4-1-5-6-3-11z" fill="#59a848"/><path d="M19 18l8 10" stroke="#d28b35" stroke-width="3.500"/>', 'on'],
    ['<rect x="1" y="0" width="28" height="28" rx="5" fill="#b20b00"/><path d="M7 21c5-3 9-10 8-15-2-2-1 8 8 10 2 1-6-1-10 1-3 1-5 3-6 4z" fill="none" stroke="#fff" stroke-width="1.900"/>', 'dot'],
    ['<circle cx="17" cy="15" r="13" fill="#e66a44"/><path d="M17 2a13 13 0 0 1 13 13H17z" fill="#ff9a73"/><path d="M4 15h26a13 13 0 0 1-26 0z" fill="#cf4526"/><rect x="0" y="7" width="15" height="16" rx="1.500" fill="#bf3d1c"/><text x="7.500" y="19.500" font-size="13" font-weight="700" text-anchor="middle" fill="#fff" font-family="Open Sans">P</text>', 'dot'],
    [chrome, 'dot']
  ];
</script>

{#snippet ico(name, size = 20)}
  <svg class="ico" width={size} height={size} viewBox="0 0 16 16">{@html icons[name]}</svg>
{/snippet}

{#snippet bar(items)}
  <div class="bar">
    <div class="grip"></div>
    {#each items as it}
      {#if it === '|'}<i class="sep"></i>
      {:else if it === 'v'}<i class="caret"></i>
      {:else if it === 'SCALE'}<div class="combo scale"><span>1:286,749</span><svg width="12" height="8" viewBox="0 0 12 8"><path d="M1 1l5 5 5-5" fill="none" stroke="#777" /></svg></div>
      {:else if it === 'PCT'}<div class="combo pct"><span>70%</span><svg width="12" height="8" viewBox="0 0 12 8"><path d="M1 1l5 5 5-5" fill="none" stroke="#aaa" /></svg></div>
      {:else if it === 'EDITOR'}<div class="editor">Editor<b></b></div>
      {:else if it[0] === '!'}<div class="btn on" class:dim={it === '!draft'}>{@render ico(it.slice(1))}</div>
      {:else}<div class="btn">{@render ico(it)}</div>{/if}
    {/each}
    <div class="more"><svg width="9" height="10" viewBox="0 0 9 10"><path d="M1 1.500h7" stroke="#000" stroke-width="1.500" /><path d="M.5 5h8l-4 4.500z" fill="#000" /></svg></div>
  </div>
{/snippet}

{#snippet exp(kind)}
  <svg class="exp" width="12" height="12" viewBox="0 0 12 12"><rect x=".5" y=".5" width="11" height="11" rx="1" fill="#f3f3f3" stroke="#989898" /><path d={kind === '+' ? 'M3 6h6M6 3v6' : 'M3 6h6'} stroke="#3a52a0" stroke-width="1.200" /></svg>
{/snippet}

{#snippet pinclose()}
  <svg width="32" height="14" viewBox="0 0 32 14"><path d="M3.500 1.500h5v6.500M3.500 1.500V8M7.700 1.500V8M1 8.500h9.500M5.800 8.500V13" fill="none" stroke="#111" stroke-width="1.500" /><path d="M22 3l8 8.500M30 3l-8 8.500" stroke="#000" stroke-width="2" /></svg>
{/snippet}

<svg class="defs" width="0" height="0">
  <defs>
    <linearGradient id="cyl"><stop stop-color="#8298b5" /><stop offset=".4" stop-color="#f3f7fb" /><stop offset="1" stop-color="#7288a8" /></linearGradient>
    <radialGradient id="globe" cx=".35" cy=".3"><stop stop-color="#b9dcf5" /><stop offset="1" stop-color="#1c4f93" /></radialGradient>
    <radialGradient id="ball" cx=".35" cy=".3"><stop stop-color="#eee" /><stop offset="1" stop-color="#888" /></radialGradient>
    <linearGradient id="cl" x2="0" y2="1"><stop stop-color="#b9cdf2" /><stop offset="1" stop-color="#f1f5fc" /></linearGradient>
  </defs>
</svg>

<div class="app">
  <header class="title">
    <svg width="21" height="21" viewBox="0 0 28 28">{@html tasks[16][0]}</svg>
    <span>Site_Suitability_Analysis - ArcMap</span>
    <svg class="winbtns" width="132" height="14" viewBox="0 0 132 14"><g fill="none" stroke="#111" stroke-width="1.200"><path d="M1 7h12M59.500 4.500h8v8h-8zM62 4.500V2h8.500v8.500H68M119 1.500l11 11M130 1.500l-11 11" /></g></svg>
  </header>
  <nav class="menu">{#each menus as m}<span>{m}</span>{/each}</nav>

  <section class="bars">
    <div class="line">{@render bar(row1)}<div class="g1"></div>{@render bar(rowE)}</div>
    <div class="line second">{@render bar(rowF)}</div>
    <div class="line tight">{@render bar(row3)}</div>
    <div class="line tight">{@render bar(row4)}</div>
  </section>

  <main>
    <aside class="toc">
      <div class="phead"><span>Table Of Contents</span>{@render pinclose()}</div>
      <div class="tocbar">
        <div class="btn on">{@render ico('t1', 21)}</div><div class="btn">{@render ico('t2')}</div><div class="btn">{@render ico('t3')}</div><div class="btn">{@render ico('t4')}</div><i class="sep"></i><div class="btn">{@render ico('list', 19)}</div>
      </div>
      <div class="toctree">
        {#each toc as r}
          {#if r.ramp}
            <div class="ramp"><i></i><div><span>Highly Suitable</span><span>Least Suitable</span></div></div>
          {:else if r.head}<div class="row head">{r.t}</div>
          {:else if r.sw}<div class="row sw"><i class={r.sw}></i>{r.t}</div>
          {:else}
            <div class="row d{r.d}">
              {@render exp(r.e)}
              {#if r.icon}{@render ico('layers')}<b>{r.t}</b>
              {:else}
                <svg class="chk" width="14" height="14" viewBox="0 0 14 14"><rect x=".7" y=".7" width="12.600" height="12.600" fill="#fff" stroke="#222" stroke-width="1.300" />{#if r.c}<path d="M3 6.500l3 3.500 5-6.500" fill="none" stroke="#000" stroke-width="2.200" />{/if}</svg>
                <span class:sel={r.sel}>{r.t}</span>
              {/if}
            </div>
          {/if}
        {/each}
      </div>
    </aside>

    <section class="view">
      <svg class="map" viewBox="300 193 1124 778" width="1124" height="778">
        <g fill="#ffff73" shape-rendering="crispEdges">{#each cells as [x, y, w, h]}<rect {x} {y} width={w} height={h} />{/each}</g>
        <circle cx="852.700" cy="564" r="31.700" fill="#ffbebe" />
        {#each tiles as t}
          <g transform="translate({t.x} {t.y}) scale(.33333)">
            {#each t.lines.split('|') as p}<polyline points={p} />{/each}
          </g>
        {/each}
        {#each tiles as t}
          <g transform="translate({t.x} {t.y}) scale(.33333)">
            {#each labelsOf(t.labels) as l}<text x={l.x} y={l.y} textLength={l.w} lengthAdjust="spacingAndGlyphs">{l.t}</text>{/each}
          </g>
        {/each}
      </svg>
      <div class="vbar">
        <div class="vb on">{@render ico('mview', 12)}</div><div class="vb">{@render ico('mlay', 12)}</div><i></i><div class="vb">{@render ico('refresh', 12)}</div><div class="vb p">{@render ico('pause', 11)}</div>
        <u></u>
      </div>
    </section>

    <div class="split"><i></i></div>

    <aside class="cat">
      <div class="phead"><span>Catalog</span>{@render pinclose()}</div>
      <div class="catbar">
        {#each catbar as it}
          {#if it === '|'}<i class="sep"></i>{:else if it === 'v' || it === 'w'}<i class="caret" class:dimc={it === 'w'}></i>{:else}<div class="btn">{@render ico(it)}</div>{/if}
        {/each}
      </div>
      <div class="loc"><span>Location:</span><div class="combo">{@render ico('model')}<em>MarketplaceSuitability</em><svg width="12" height="8" viewBox="0 0 12 8"><path d="M1 1l5 5 5-5" fill="none" stroke="#777" /></svg></div></div>
      <div class="cattree">
        <div class="rows">
          {#each catalog as [t, d, e, i]}
            <div class="crow c{d}">{#if e}{@render exp(e)}{/if}{@render ico(i, 19)}<span class:hl={d === 3}>{t}</span></div>
          {/each}
        </div>
        <div class="scroll"><i></i></div>
      </div>
      <div class="tabs">
        <div class="tab w1">{@render ico('wbox')}ArcToolbox</div><div class="tab w2 act">{@render ico('wcat')}Catalog</div><div class="tab w3">{@render ico('wsearch')}Search</div>
      </div>
    </aside>

    <div class="side">
      <div class="stab s1">{@render ico('attr', 18)}<span>Attributes</span></div>
      <div class="stab s2">{@render ico('create', 18)}<span>Create Features</span></div>
    </div>
  </main>

  <footer class="status">293876.87&nbsp; 8029655.868 Meters</footer>

  <div class="taskbar">
    <div class="weather">
      <svg width="31" height="21" viewBox="0 0 31 21"><path d="M7 20a6.500 6.500 0 0 1-.5-13A9 9 0 0 1 23 6.500 7 7 0 0 1 24 20z" fill="url(#cl)" /></svg>
      <div><span>14°C</span><span class="dimt">Cloudy</span></div>
    </div>
    <div class="tasks">
      {#each tasks as [g, st]}
        <div class="task" class:active={st === 'on'}><div class="tile"><svg width="30" height="30" viewBox="0 0 30 30">{@html g}</svg></div>{#if st}<i class:blue={st === 'on'}></i>{/if}</div>
      {/each}
    </div>
    <div class="tray">
      <svg class="up" width="16" height="10" viewBox="0 0 16 10"><path d="M1 9l7-7.500L15 9" fill="none" stroke="#fff" stroke-width="1.300" /></svg>
      <svg class="bt" width="15" height="20" viewBox="0 0 15 20"><rect width="15" height="20" rx="6" fill="#0a84f0" /><path d="M4 6l7 7-3.500 3.500v-13L11 7l-7 7" fill="none" stroke="#fff" stroke-width="1.200" /></svg>
      <div class="lang"><span>ENG</span><span>US</span></div>
      <svg class="wifi" width="78" height="20" viewBox="0 0 78 20"><g fill="none" stroke="#fff" stroke-width="1.500"><path d="M1 8a11 11 0 0 1 16 0" stroke="#777" /><path d="M3.500 10.500a8 8 0 0 1 11 0M6 13a4.500 4.500 0 0 1 6 0" /><path d="M29 7.500h3L37 3v14l-5-4.500h-3zM39 7c1.500 2 1.500 4 0 6" /><path d="M42 5c3 3 3 7 0 10" stroke="#777" /><path d="M63 5.500h11v10.500H62V11M76 8.500v4.500" /></g><circle cx="9" cy="15" r="1.800" fill="#fff" /><path d="M59 2v3M62.500 2v3" stroke="#fff" stroke-width="1.300" /><path d="M57 4.500h7v3.500l-2 2v3h-3v-3l-2-2zM65.500 8h6.500v5.500h-6.500z" fill="#fff" /></svg>
      <div class="clock"><span>22:04</span><span>19/7/2022</span></div>
      <div class="badge">1</div>
    </div>
  </div>
</div>

<style>
  :global(body) { margin: 0; overflow: hidden; }
  .app { width: 1920px; height: 1080px; display: flex; flex-direction: column; overflow: hidden; background: linear-gradient(90deg, #f0f0f0 0, #f1f1f1 30%, #f6f6f6 60%, #fafafa 100%); font-family: "Open Sans", "Noto Sans", sans-serif; font-size: 14px; color: #1c1c22; white-space: nowrap; }
  .app *, .app { box-sizing: border-box; }
  .defs { position: absolute; }
  svg { flex: none; display: block; }
  .ico { overflow: visible; }
  .title { height: 29px; flex: none; background: #fff; display: flex; align-items: center; padding: 0 24px 1px 2px; gap: 4px; font-size: 15px; color: #000; letter-spacing: -.23px; }
  .winbtns { margin-left: auto; }
  .menu { height: 32px; flex: none; display: flex; align-items: center; padding: 0 0 1px 15px; gap: 20.300px; font-size: 14.200px; letter-spacing: -.08px; }
  .bars { height: 129px; flex: none; display: flex; flex-direction: column; }
  .line { height: 33px; display: flex; align-items: flex-start; flex: none; }
  .second { padding-left: 841px; }
  .g1 { width: 8px; }
  .bar { height: 30px; display: flex; align-items: center; background: linear-gradient(#fcfcfc, #f1f1f1); border-radius: 3px; margin-left: 3px; }
  .tight .bar { margin-left: 2px; }
  .second .bar { margin-left: 0; }
  .grip { width: 2px; height: 19px; margin: 0 5px 0 4px; background: repeating-linear-gradient(#aaa 0 2px, transparent 2px 5px); }
  .btn { width: 27.400px; height: 28px; display: grid; place-items: center; flex: none; }
  .btn.on { background: #dce9f5; border: 1px solid #3a8ad8; }
  .btn.dim { border-color: #a3bdd3; background: #e6ebf0; }
  .sep { width: 1px; height: 20px; background: #b5b5b5; margin: 0 3.300px; flex: none; }
  .caret { width: 13px; flex: none; display: grid; place-items: center; }
  .caret::before { content: ""; border: 4px solid transparent; border-top: 5px solid #111; border-bottom: 0; }
  .caret.dimc::before { border-top-color: #777; }
  .combo { background: #fff; border: 1px solid #8d8d8d; border-radius: 2px; display: flex; align-items: center; justify-content: space-between; height: 27px; }
  .scale { width: 185px; padding: 0 5px 3px 3px; letter-spacing: -.8px; }
  .pct { width: 74px; margin-right: 8px; border-color: #c5c5c5; padding: 0 5px 3px 3px; color: #777; font-size: 14px; letter-spacing: -.9px; }
  .pct span { background: #f2f2f2; width: 46px; }
  .editor { width: 55px; display: flex; align-items: center; gap: 3px; padding-left: 3px; color: #000; letter-spacing: -.3px; }
  .editor b { border: 4px solid transparent; border-top: 5px solid #111; border-bottom: 0; }
  .more { width: 13px; height: 31px; margin-left: 3px; background: linear-gradient(#f4f4f4, #a9a9a9); display: flex; align-items: flex-end; justify-content: center; padding-bottom: 3px; align-self: flex-start; }

  main { height: 807px; flex: none; display: flex; }
  .toc { width: 291px; flex: none; display: flex; flex-direction: column; }
  .phead { height: 25px; flex: none; display: flex; align-items: center; justify-content: space-between; padding: 0 4px 0 5px; background: linear-gradient(90deg, #bfcddb, #d7e4f2); color: #1e2a38; letter-spacing: -.05px; margin-top: 1px; }
  .tocbar { height: 31px; flex: none; display: flex; align-items: center; background: linear-gradient(#fbfbfb, #f1f1f1); padding-left: 5px; }
  .tocbar .btn.on { width: 28px; }
  .tocbar .sep { margin: 0 4px 0 3px; }
  .toctree { height: 746px; width: 291px; background: #fff; border: 1px solid #868b94; padding-top: 2px; font-size: 14.200px; letter-spacing: 0; }
  .row { height: 22.480px; display: flex; align-items: center; }
  .row .exp { margin-top: 3px; }
  .d0 { padding-left: 10px; gap: 8px; }
  .d0 b { margin-left: -2px; letter-spacing: -.6px; margin-top: -1px; }
  .d1 { padding-left: 34px; gap: 9.500px; }
  .d2 { padding-left: 58px; gap: 9px; }
  .row span { padding: 0 3px 0 2px; line-height: 22px; margin-left: -2px; }
  .row .sel { background: #0078d7; color: #fff; padding-right: 2px; }
  .row.head { padding-left: 103px; letter-spacing: -.1px; }
  .row.sw { padding-left: 74px; gap: 4px; letter-spacing: -.2px; }
  .sw i { width: 19px; height: 14px; border: 1.300px solid #333; }
  .sw i.pink { background: #ffbebe; border-color: #888; }
  .sw i.yellow { background: #ffff73; border-color: #888; }
  .ramp { height: 90px; display: flex; padding-left: 74px; gap: 7px; }
  .ramp i { width: 16px; height: 45px; background: linear-gradient(#1e6b06, #7db100 30%, #ffff00 50%, #ff9d00 75%, #ff2a00); }
  .ramp div { display: flex; flex-direction: column; gap: 26px; margin-top: -2px; letter-spacing: -.12px; }
  .ramp span { line-height: 19px; }

  .view { width: 1132px; flex: none; padding-left: 7px; display: flex; flex-direction: column; }
  .map { border: 0; background: #fdfefe; box-sizing: content-box; border-left: 2px solid #868686; border-top: 2px solid #8b8b8b; margin-top: 1px; }
  .map polyline { fill: none; stroke: #1a1a1a; stroke-width: 1.100; vector-effect: non-scaling-stroke; shape-rendering: crispEdges; stroke-linejoin: round; }
  .map text { font: 700 21.500px "DejaVu Sans", sans-serif; fill: #2b2725; }
  .vbar { height: 20px; flex: none; display: flex; align-items: center; border-left: 2px solid #999; background: #f0f0f0; border-top: 1px solid #e3e3e3; width: 1124px; }
  .vb { width: 21px; height: 18px; display: grid; place-items: center; }
  .vb.on { background: #cce4f7; border: 1px solid #99c9ef; }
  .vbar i { width: 1px; height: 16px; background: #777; margin: 0 6px 0 3px; }
  .vb.p { margin-left: 1px; }
  .vbar u { width: 20px; height: 2px; background: #999; margin-left: 490px; }
  .split { width: 21px; flex: none; display: grid; place-items: center; border-left: 1px solid #ddd; border-right: 1px solid #ddd; margin: 1px 8px 0 1px; padding-top: 118px; }
  .split i { width: 3px; height: 21px; background: #8a8a8a; }

  .cat { width: 439px; flex: none; display: flex; flex-direction: column; }
  .catbar { height: 29px; flex: none; display: flex; align-items: center; background: #fff; padding-left: 4px; margin-top: 1px; }
  .catbar .btn { width: 28.300px; }
  .catbar .caret { width: 17px; }
  .catbar .sep { margin: 0 5px; background: #999; height: 22px; }
  .loc { height: 32px; flex: none; display: flex; align-items: center; padding: 1px 3px 0 3px; gap: 10px; font-size: 13.500px; letter-spacing: -.37px; background: #f0f0f0; }
  .loc span { width: 54px; }
  .loc .combo { flex: 1; padding: 0 4px 0 3px; gap: 5px; justify-content: flex-start; }
  .loc em { font-style: normal; flex: 1; }
  .cattree { height: 685px; flex: none; display: flex; background: #fff; border-left: 2px solid #767676; border-top: 2px solid #767676; margin-right: 6px; border-bottom: 1px solid #ddd; }
  .rows { flex: 1; padding-top: 1px; }
  .crow { height: 21.250px; display: flex; align-items: center; font-size: 14.300px; letter-spacing: -.07px; color: #181420; }
  .crow .ico { margin: 0 6px 0 9px; }
  .c0 { padding-left: 8px; } .c1 { padding-left: 31.800px; } .c2 { padding-left: 55.600px; } .c3 { padding-left: 91.400px; }
  .hl { background: #f0f0f0; line-height: 20px; margin-left: -2px; padding: 0 2px; }
  .scroll { width: 20px; background: #f0f0f0; padding: 22px 8px; }
  .scroll i { display: block; width: 3px; height: 500px; background: #8a8a8a; border-radius: 2px; }
  .tabs { display: flex; padding: 4px 0 0 3px; font-size: 14px; letter-spacing: -.13px; }
  .tab { height: 25px; display: flex; align-items: center; gap: 4px; padding-left: 5px; color: #777; background: #f3f3f3; border: 1px solid #aaa; border-top: 0; border-radius: 0 0 4px 4px; }
  .tab.act { background: #fff; color: #222; }
  .w1 { width: 111px; } .w2 { width: 86px; } .w3 { width: 79px; }

  .side { width: 28px; padding: 3px 0 0 2px; display: flex; flex-direction: column; gap: 17px; }
  .stab { width: 26px; border: 1px solid #9a9a9a; border-right: 0; border-radius: 5px 0 0 5px; display: flex; flex-direction: column; align-items: center; padding-top: 5px; gap: 5px; background: #f5f5f5; }
  .stab span { writing-mode: vertical-rl; font-size: 14px; line-height: 18px; color: #666; letter-spacing: .4px; }
  .s1 { height: 99px; } .s2 { height: 146px; }
  .s1 span { letter-spacing: -.1px; }

  .status { height: 23px; flex: none; background: #f0f0f0; border-top: 1px solid #e2e2e2; padding-left: 1604px; line-height: 21px; font-size: 13.800px; letter-spacing: -.25px; }
  .taskbar { height: 60px; flex: none; background: linear-gradient(90deg, #262626 0, #282626 180px, #381f20 215px, #3a2021 245px, #2a2626 290px, #262626 330px); color: #fff; display: flex; font-size: 14px; letter-spacing: -.4px; }
  .weather { width: 410.500px; flex: none; display: flex; padding: 0 0 0 25px; gap: 9px; align-items: center; }
  .weather svg { margin-top: -4px; }
  .weather div { display: flex; flex-direction: column; line-height: 20px; }
  .dimt { color: #c9c9c9; letter-spacing: .1px; }
  .tasks { display: flex; width: 1168px; flex: none; }
  .task { width: 55.050px; height: 60px; display: flex; flex-direction: column; align-items: center; padding-top: 5px; flex: none; }
  .tile { width: 48px; height: 45px; display: grid; place-items: center; padding-top: 5px; flex: none; }
  .tile svg { overflow: visible; }
  .active .tile { background: #3b3b3b; box-shadow: 0 0 0 1px #474747, 0 5px 0 1px #3b3b3b; border-radius: 4px; }
  .task i { width: 8px; height: 4px; border-radius: 2px; background: #9b9b9b; z-index: 1; }
  .task i.blue { width: 20px; background: #4cc2ff; }
  .tray { display: flex; align-items: center; }
  .up { margin-left: 3px; margin-right: 14px; }
  .lang { width: 40px; margin: 0 17px 0 16px; display: flex; flex-direction: column; align-items: center; line-height: 20px; }
  .clock { width: 77px; display: flex; flex-direction: column; align-items: flex-end; line-height: 20px; margin-right: 10px; margin-left: 9px; flex: none; letter-spacing: -.15px; }
  .badge { width: 20px; height: 20px; border-radius: 50%; background: #4cc2ff; color: #111; font-size: 12px; text-align: center; line-height: 20px; flex: none; }
</style>
